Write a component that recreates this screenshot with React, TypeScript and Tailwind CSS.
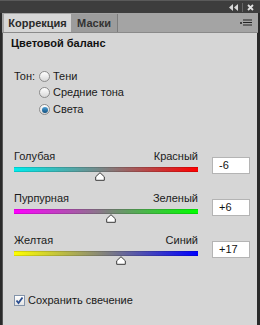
import React from 'react'

const FONT = { fontFamily: '"Liberation Sans", Arial, sans-serif' }

function Radio({ checked }: { checked?: boolean }) {
  return (
    <span className="relative flex h-[11px] w-[11px] items-center justify-center rounded-full border border-[#8c8c8c] bg-gradient-to-b from-[#ffffff] to-[#d8d8d8]">
      {checked && (
        <span className="h-[6px] w-[6px] rounded-full bg-gradient-to-b from-[#4aa0d8] to-[#13507e]" />
      )}
    </span>
  )
}

function Slider({
  left,
  right,
  value,
  pos,
  gradient,
}: {
  left: string
  right: string
  value: string
  pos: number
  gradient: string
}) {
  return (
    <div className="flex h-[42px] items-start pl-[11px]">
      <div className="flex w-[184px] flex-col">
        <div className="flex h-[14px] items-center justify-between text-[11px] leading-[14px] text-[#1a1a1a]">
          <span>{left}</span>
          <span>{right}</span>
        </div>
        <div className="relative mt-[4px] h-[5px] w-full">
          <div className={`h-[5px] w-full border-y border-[#00000022] ${gradient}`} />
          <svg
            width="10"
            height="9"
            viewBox="0 0 10 9"
            className="absolute top-[5px]"
            style={{ left: pos - 5 }}
          >
            <path d="M5 0.7 L9.3 4.8 L9.3 8.3 L0.7 8.3 L0.7 4.8 Z" fill="#ffffff" stroke="#3a3a3a" strokeWidth="1" />
          </svg>
        </div>
      </div>
      <div className="ml-[14px] mt-[8px] flex h-[17px] w-[38px] items-center border border-[#b4b4b4] bg-white pl-[6px] text-[11px] text-[#111]">
        {value}
      </div>
    </div>
  )
}

export default function App() {
  return (
    <div className="flex h-[325px] w-[260px] flex-col bg-[#2a2a2a]" style={FONT}>
      {/* title bar */}
      <div className="flex h-[13px] items-center justify-end border-t border-[#5a5a5a] bg-[#3d3d3d] pr-[6px]">
        <svg width="9" height="7" viewBox="0 0 9 7" className="mr-[4px]">
          <path d="M4 0 L0 3.5 L4 7 Z M9 0 L5 3.5 L9 7 Z" fill="#d8d8d8" />
        </svg>
        <span className="mr-[4px] h-[9px] w-px bg-[#666]" />
        <svg width="7" height="7" viewBox="0 0 7 7">
          <path d="M1 1 L6 6 M6 1 L1 6" stroke="#e0e0e0" strokeWidth="1.8" />
        </svg>
      </div>

      {/* tabs */}
      <div className="mx-[2px] flex h-[20px] items-end border-b border-[#8a8a8a] bg-[#a4a4a4]">
        <div className="ml-[2px] flex h-[18px] w-[67px] items-center justify-center bg-[#d6d6d6] text-[11px] font-bold text-[#2a2a2a]">
          Коррекция
        </div>
        <div className="flex h-[18px] w-[47px] items-center justify-center border-r border-[#7c7c7c] bg-[#9c9c9c] text-[11px] font-bold text-[#333]">
          Маски
        </div>
        <div className="ml-auto mr-[6px] flex h-[18px] items-center gap-[1px]">
          <span className="h-[2px] w-[2px] rounded-full bg-[#222]" />
          <svg width="9" height="8" viewBox="0 0 9 8">
            <path d="M0 1 H9 M0 3.5 H9 M0 6 H9" stroke="#222" strokeWidth="1" />
          </svg>
        </div>
      </div>

      {/* body */}
      <div className="ml-[2px] mr-[3px] flex flex-1 flex-col border-l border-[#555] bg-[#d6d6d6]">
        <div className="mt-[3px] h-[14px] pl-[8px] text-[11px] font-bold leading-[14px] text-[#111]">
          Цветовой баланс
        </div>

        <div className="mt-[18px] flex pl-[11px] text-[11px] text-[#1a1a1a]">
          <div className="flex h-[16px] w-[25px] items-center">Тон:</div>
          <div className="flex flex-col">
            <label className="flex h-[16px] items-center gap-[3px]">
              <Radio />
              <span>Тени</span>
            </label>
            <label className="flex h-[17px] items-center gap-[3px]">
              <Radio />
              <span>Средние тона</span>
            </label>
            <label className="flex h-[17px] items-center gap-[3px]">
              <Radio checked />
              <span>Света</span>
            </label>
          </div>
        </div>

        <div className="mt-[31px] flex flex-col">
          <Slider
            left="Голубая"
            right="Красный"
            value="-6"
            pos={86}
            gradient="bg-[linear-gradient(to_right,#00ecec,#7f8080_50%,#ff0000)]"
          />
          <Slider
            left="Пурпурная"
            right="Зеленый"
            value="+6"
            pos={97}
            gradient="bg-[linear-gradient(to_right,#ff00ff,#808080_50%,#00ff00)]"
          />
          <Slider
            left="Желтая"
            right="Синий"
            value="+17"
            pos={107}
            gradient="bg-[linear-gradient(to_right,#ffff00,#808080_50%,#0000ff)]"
          />
        </div>

        <label className="mt-[18px] flex h-[14px] items-center gap-[3px] pl-[11px] text-[11px] text-[#1a1a1a]">
          <span className="flex h-[11px] w-[11px] items-center justify-center border border-[#8494aa] bg-gradient-to-b from-[#ffffff] to-[#e4e4e4]">
            <svg width="9" height="9" viewBox="0 0 9 9">
              <path d="M1.5 4.5 L3.5 7 L7.5 1.5" fill="none" stroke="#2a4d8f" strokeWidth="1.8" />
            </svg>
          </span>
          <span>Сохранить свечение</span>
        </label>
      </div>
    </div>
  )
}
